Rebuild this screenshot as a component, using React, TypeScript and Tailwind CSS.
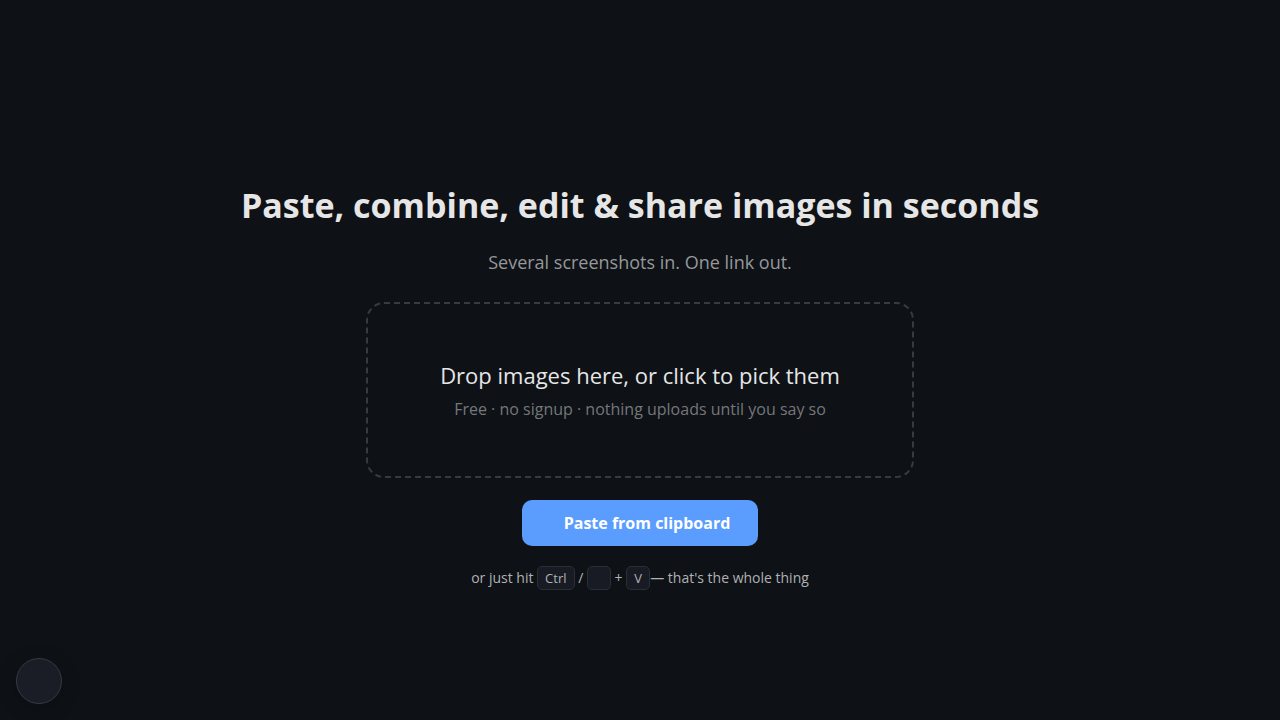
import type { ReactNode } from 'react';

function Key({ children }: { children?: ReactNode }) {
  return (
    <kbd className="inline-flex h-6 min-w-6 items-center justify-center rounded-[5px] border border-[#2a2e37] bg-[#181b23] px-[7px] font-[inherit] text-[13px]">
      {children ?? <>&nbsp;</>}
    </kbd>
  );
}

export default function App() {
  return (
    <main className="flex min-h-screen flex-col items-center justify-center bg-[#0e1116] px-6 pt-[54px] text-center font-['Open_Sans',sans-serif] text-[#e6e6e6]">
      <h1 className="text-[34px] leading-[42px] font-bold">
        Paste, combine, edit &amp; share images in seconds
      </h1>
      <p className="mt-6 text-lg leading-6 text-[#96989a]">Several screenshots in. One link out.</p>

      <button
        type="button"
        className="mt-7 flex h-44 w-full max-w-[548px] cursor-pointer flex-col items-center justify-center gap-1 rounded-[18px] border-2 border-dashed border-[#353a43] pt-0.5"
      >
        <span className="text-[22px] leading-8">Drop images here, or click to pick them</span>
        <span className="text-base leading-7 text-[#75777a]">
          Free · no signup · nothing uploads until you say so
        </span>
      </button>

      <button
        type="button"
        className="mt-[22px] h-[46px] cursor-pointer rounded-[10px] bg-[#5b9dff] pr-7 pl-[42px] text-base font-bold text-white"
      >
        Paste from clipboard
      </button>

      <p className="mt-5 text-sm leading-6 text-[#b0b2b4]">
        or just hit <Key>Ctrl</Key> / <Key /> + <Key>V</Key>— that's the whole thing
      </p>

      <button
        type="button"
        aria-label="Menu"
        className="fixed bottom-4 left-4 size-[46px] cursor-pointer rounded-full border border-[#353a43] bg-[#1a1d26] shadow-[0_4px_20px_rgba(0,0,0,0.2)]"
      />
    </main>
  );
}
